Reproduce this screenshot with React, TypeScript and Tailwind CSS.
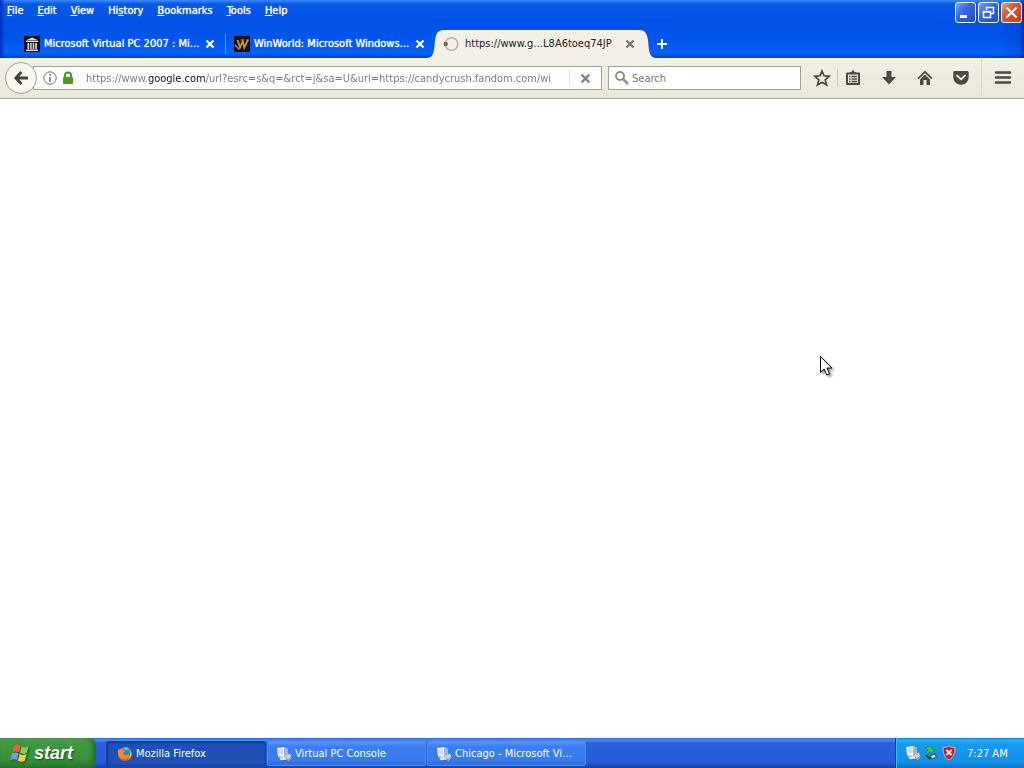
import type { ReactNode } from "react";

const menus: { before: string; key: string; after: string }[] = [
  { before: "", key: "F", after: "ile" },
  { before: "", key: "E", after: "dit" },
  { before: "", key: "V", after: "iew" },
  { before: "Hi", key: "s", after: "tory" },
  { before: "", key: "B", after: "ookmarks" },
  { before: "", key: "T", after: "ools" },
  { before: "", key: "H", after: "elp" },
];

function Cross({ className }: { className: string }) {
  return (
    <svg viewBox="0 0 10 10" className={className} fill="none" stroke="currentColor" strokeWidth="2.200" aria-hidden="true">
      <path d="M1.500 1.500 8.500 8.500M8.500 1.500 1.500 8.500" />
    </svg>
  );
}

function ArchiveIcon() {
  return (
    <svg viewBox="0 0 16 16" className="size-4 shrink-0" aria-hidden="true">
      <rect width="16" height="16" fill="#0b0b12" />
      <path d="M2.500 4 8 1.500 13.500 4zM2 4.500h12V6H2zM3.500 7h1.700v6H3.500zM6.200 7h1.500v6H6.200zM8.700 7h1.500v6H8.700zM11.200 7h1.700v6h-1.700zM2 13.500h12V15H2z" fill="#d9d9e2" />
    </svg>
  );
}

function WinWorldIcon() {
  return (
    <svg viewBox="0 0 16 16" className="size-4 shrink-0" aria-hidden="true">
      <rect width="16" height="16" fill="#15100f" />
      <path d="M3.500 4 6 11.500 8.800 5l1.500 6.500L14 4" fill="none" stroke="#d0902f" strokeWidth="1.800" />
      <path d="M6.500 4h3M12 4h3" stroke="#d0902f" strokeWidth="1.200" />
      <path d="M1 9l4.500 4.500" stroke="#8d8da5" strokeWidth="1.400" />
    </svg>
  );
}

function ThrobberIcon() {
  return (
    <svg viewBox="0 0 16 16" className="size-4 shrink-0" fill="none" aria-hidden="true">
      <circle cx="8.500" cy="8" r="6.300" stroke="#b5b5ab" strokeWidth="1.600" />
      <circle cx="2.700" cy="8" r="2.200" fill="#65655f" />
    </svg>
  );
}

function PcIcon() {
  return (
    <svg viewBox="0 0 16 16" className="size-4 shrink-0" aria-hidden="true">
      <path d="M1 2 8.500 1v10L2 10.500z" fill="#f1f2f6" />
      <path d="M2.500 3.500 7.500 2.800v5.700l-4.700-.2z" fill="#d3d9e6" />
      <path d="M8.500 1 12 2.500v7.500L8.500 11z" fill="#a9b0be" />
      <path d="M3 11.500l7-.5 2 2.500-7 1z" fill="#e3e6ec" />
      <path d="M5 14.500l7-1 .5 1-7 1z" fill="#596782" />
      <path d="M9.500 9.500l4.500-2 1.500 4-3 3.500-3-2z" fill="#c9d0dc" />
      <path d="M10 12.500l2.300 1.500 2.700-3" fill="none" stroke="#8592a8" strokeWidth="1" />
    </svg>
  );
}

function FirefoxIcon() {
  return (
    <svg viewBox="0 0 16 16" className="size-4 shrink-0" aria-hidden="true">
      <circle cx="8" cy="8" r="7" fill="#e2601b" />
      <circle cx="8.500" cy="6.500" r="5" fill="#2f87d0" />
      <path d="M6 2.500c2-1.500 5-1 6.500.8l-3 .7z" fill="#70c5ec" />
      <path d="M1.500 3c.8.8 1.500.8 2.700.8.8-.7 1.500-1 2.300-1-.7.700-.8 1.300-.6 1.900l2.300.6-2 1.400C6 9 8 10.200 10.500 9c1-.5 2.100 0 1.600 1-3 4-8 3.800-10.100.5C.800 8.500.800 5 1.500 3z" fill="#f28b22" />
      <path d="M13.500 4c1.500 3 1 7.500-2.300 9.500 1.600-2.500 2.300-5.500 2.300-9.500z" fill="#f8c540" />
    </svg>
  );
}

function WindowsFlag() {
  return (
    <svg viewBox="1 1 18 17" className="size-5 shrink-0 drop-shadow-[1px_1px_1px_#174b17]" aria-hidden="true">
      <path d="M4.500 3c2-1.500 4-1.300 6 0L9 9c-2-1.200-4-1.200-6 0z" fill="#ee6336" />
      <path d="M11.300 3.500c2 1.200 4 1.300 6.500 0L16.200 9.500c-2.200 1.200-4.300 1-6.300-.2z" fill="#91ca4a" />
      <path d="M2.700 10c2-1.300 4-1.200 6 0L7.200 16c-2-1.300-4-1.200-6 0z" fill="#6b9df5" />
      <path d="M9.600 10.400c2 1.200 4.200 1.200 6.300.1L14.300 16.500c-2.200 1.200-4.300 1.100-6.300-.1z" fill="#f7cc3d" />
    </svg>
  );
}

function ToolButton({ label, children }: { label: string; children: ReactNode }) {
  return (
    <button aria-label={label} className="flex h-7 w-9 shrink-0 items-center justify-center text-[#4b4a42]">
      <svg viewBox="0 0 18 18" className="size-[18px]" aria-hidden="true">{children}</svg>
    </button>
  );
}

function CaptionButton({ label, close, children }: { label: string; close?: boolean; children: ReactNode }) {
  return (
    <button
      aria-label={label}
      className={`flex size-[21px] items-center justify-center rounded-[3px] border border-white ${
        close
          ? "bg-[linear-gradient(135deg,#f0a080,#e05a35_35%,#c93a12)]"
          : "bg-[linear-gradient(135deg,#7fa5f5,#3768e2_40%,#1b48cc)]"
      }`}
    >
      <svg viewBox="0 0 19 19" className="size-[19px]" fill="none" stroke="#fff" aria-hidden="true">{children}</svg>
    </button>
  );
}

function Tab({ icon, title }: { icon: ReactNode; title: string }) {
  return (
    <div className="flex h-7 w-[209px] items-center pr-[5px] text-white">
      <button className="flex flex-1 items-center gap-1 pl-2 whitespace-nowrap">
        {icon}
        <span className="[text-shadow:0_0_1px_#fff]">{title}</span>
      </button>
      <button aria-label="Close tab" className="flex size-5 shrink-0 items-center justify-center">
        <Cross className="size-[10px]" />
      </button>
    </div>
  );
}

function TaskButton({ icon, title, active }: { icon: ReactNode; title: string; active?: boolean }) {
  return (
    <button
      className={`flex h-[25px] items-center gap-[3px] rounded-[2px] border whitespace-nowrap text-white ${
        active
          ? "w-40 border-[#153f99] bg-[#1e50b7] pl-[10px] shadow-[inset_1px_1px_2px_#123a8c]"
          : "w-[159px] border-[#4b8cf5] bg-[linear-gradient(180deg,#5296fb,#3b7ef1_20%,#387bee_80%,#2f6bdc)] pl-2"
      }`}
    >
      {icon}
      <span>{title}</span>
    </button>
  );
}

export default function App() {
  return (
    <div className="flex min-h-screen flex-col bg-white font-['DejaVu_Sans_Condensed','Liberation_Sans',sans-serif] text-[11px] leading-4 text-[#222]">
      <header className="flex flex-col bg-[linear-gradient(90deg,#0030c0_0,transparent_5px),linear-gradient(270deg,#0026b0_0,#0026b033_4px,transparent_30px),linear-gradient(180deg,#3a8cff_0,#0a58e6_4px,#0052e6_20px,#0054ea_38px,#0462fb_53px,#0050dc_56px,#0340b8_58px)]">
        <div className="flex items-start justify-between pr-[2px]">
          <nav aria-label="Menu bar" className="flex gap-[14px] pt-[3px] pl-[7px] text-white">
            {menus.map((m) => (
              <button key={m.key + m.after} className="[text-shadow:0_0_1px_#fff]">
                {m.before}
                <span className="underline">{m.key}</span>
                {m.after}
              </button>
            ))}
          </nav>
          <div className="flex gap-[2px] pt-[2px]">
            <CaptionButton label="Minimize">
              <path d="M4 13.500h7" strokeWidth="3" />
            </CaptionButton>
            <CaptionButton label="Restore">
              <path d="M7.500 7V4.500h7v6H12M7.500 4.500h7M4.500 8.500h7v6h-7zM4.500 9h7" strokeWidth="1.500" />
            </CaptionButton>
            <CaptionButton label="Close" close>
              <path d="M4.500 4.500l10 10M14.500 4.500l-10 10" strokeWidth="2.200" />
            </CaptionButton>
          </div>
        </div>
        <div className="flex h-[35px] items-end pl-4">
          <Tab icon={<ArchiveIcon />} title="Microsoft Virtual PC 2007 : Mi…" />
          <span className="mb-1 h-5 w-px bg-[#5c9bfb]" />
          <Tab icon={<WinWorldIcon />} title="WinWorld: Microsoft Windows…" />
          <div className="-ml-2 flex h-7">
            <svg viewBox="0 0 16 28" className="h-7 w-4 shrink-0 text-[#f3f1e5]" aria-hidden="true">
              <path d="M0 28C4 27.500 6 25.500 7 20L8 10C9 3.500 11 .3 16 0v28z" fill="currentColor" />
            </svg>
            <div className="flex w-[197px] items-center bg-[#f3f1e5]">
              <button className="flex flex-1 items-center gap-[6px] whitespace-nowrap">
                <ThrobberIcon />
                <span>https://www.g…L8A6toeq74JP</span>
              </button>
              <button aria-label="Close tab" className="flex size-5 shrink-0 items-center justify-center text-[#77776d]">
                <Cross className="size-[10px]" />
              </button>
            </div>
            <svg viewBox="0 0 16 28" className="h-7 w-4 shrink-0 text-[#f3f1e5]" aria-hidden="true">
              <path d="M16 28C12 27.500 10 25.500 9 20L8 10C7 3.500 5 .3 0 0v28z" fill="currentColor" />
            </svg>
          </div>
          <button aria-label="Open a new tab" className="-ml-2 flex size-7 items-center justify-center text-white">
            <svg viewBox="0 0 10 10" className="size-[10px]" aria-hidden="true">
              <path d="M4 0h2v4h4v2H6v4H4V6H0V4h4z" fill="currentColor" />
            </svg>
          </button>
        </div>
      </header>

      <div className="flex h-[41px] items-center border-b border-[#aaa898] bg-[linear-gradient(180deg,#f3f1e5,#e9e7d8)]">
        <button aria-label="Go back" className="z-10 ml-[5px] flex size-8 shrink-0 items-center justify-center rounded-full border border-[#a3a294] bg-[#f8f7ef] text-[#45443d]">
          <svg viewBox="0 0 16 16" className="size-4" fill="none" stroke="currentColor" strokeWidth="2.800" aria-hidden="true">
            <path d="M8.500 2 2.800 8l5.700 6M3 8h12" />
          </svg>
        </button>
        <div className="-ml-1 flex h-6 min-w-0 flex-1 items-center border border-[#a3a294] bg-white pl-2">
          <button aria-label="Site information" className="flex size-4 shrink-0 items-center justify-center">
            <svg viewBox="0 0 14 14" className="size-[14px]" fill="none" stroke="#6c6c68" aria-hidden="true">
              <circle cx="7" cy="7" r="6.200" />
              <path d="M7 6v5M7 3v1.700" strokeWidth="1.500" />
            </svg>
          </button>
          <svg viewBox="0 0 12 14" className="ml-1 h-[14px] w-3 shrink-0" aria-hidden="true">
            <path d="M3 7V4.500a3 3 0 0 1 6 0V7" fill="none" stroke="#4a9a2b" strokeWidth="2" />
            <rect x="1" y="6" width="10" height="7" rx="1" fill="#4a9a2b" />
          </svg>
          <input
            aria-label="Address"
            readOnly
            value="https://www.google.com/url?esrc=s&q=&rct=j&sa=U&url=https://candycrush.fandom.com/wi"
            className="ml-3 min-w-0 flex-1 bg-[linear-gradient(90deg,#777_62px,#111_62px,#111_120px,#777_120px)] bg-clip-text pt-[2px] text-transparent outline-none"
          />
          <button aria-label="Stop loading" className="flex h-4 w-8 shrink-0 items-center justify-center border-l border-[#e4e4de] text-[#85857e]">
            <Cross className="size-[11px]" />
          </button>
        </div>
        <label className="ml-[6px] flex h-6 w-[193px] shrink-0 items-center gap-[2px] border border-[#a3a294] bg-white pl-[5px]">
          <svg viewBox="0 0 16 16" className="size-4 shrink-0" fill="none" stroke="#909089" aria-hidden="true">
            <circle cx="6" cy="6" r="4" strokeWidth="2" />
            <path d="M9 9l5 5" strokeWidth="2.500" />
          </svg>
          <input aria-label="Search" placeholder="Search" className="min-w-0 flex-1 pt-[2px] outline-none placeholder:text-[#777]" />
        </label>
        <div className="flex shrink-0 items-center pl-[3px]">
          <ToolButton label="Bookmark this page">
            <path d="M9 2l2 4.800 5.200.5-4 3.500 1.300 5.200L9 13.200 4.500 16l1.300-5.200-4-3.500L7 6.800z" fill="none" stroke="currentColor" strokeWidth="1.700" />
          </ToolButton>
          <span className="-ml-[3px] h-[18px] w-px bg-[#cbc9bb]" />
          <div className="-ml-[3px] flex">
            <ToolButton label="Show your bookmarks">
              <path d="M3 4.500h12v10.500H3z" fill="none" stroke="currentColor" strokeWidth="2" strokeLinejoin="round" />
              <path d="M6 5V3h1.500l.7-1.500h1.600l.7 1.500H12v2z" fill="currentColor" />
              <path d="M5 7.500h1.500m1 0H13M5 10h1.500m1 0H13M5 12.500h1.500m1 0H13" stroke="currentColor" strokeWidth="1.300" />
            </ToolButton>
            <ToolButton label="Downloads">
              <path d="M6.500 2h5v6H16l-7 7.500L2 8h4.500z" fill="currentColor" />
            </ToolButton>
            <ToolButton label="Home">
              <path d="M9 1.500 16.500 9l-1.200 1.200L9 4 2.700 10.200 1.500 9zM9 5.500l5 5V16h-3.500v-5h-3v5H4v-5.500z" fill="currentColor" />
            </ToolButton>
            <ToolButton label="Save to Pocket">
              <path d="M3 2h12c1 0 1.700.7 1.700 1.700V8c0 4.500-3.500 7.700-7.700 7.700S1.300 12.500 1.300 8V3.700C1.300 2.700 2 2 3 2z" fill="currentColor" />
              <path d="M5 6.500 9 10.300l4-3.800" fill="none" stroke="#f3f1e5" strokeWidth="1.800" strokeLinecap="round" />
            </ToolButton>
          </div>
          <div className="ml-[2px] flex h-10 w-[43px] items-center justify-center border-l border-[#dbd9cb]">
            <ToolButton label="Open menu">
              <path d="M2 3.500h14M2 8.500h14M2 13.500h14" stroke="currentColor" strokeWidth="2.500" strokeLinecap="round" />
            </ToolButton>
          </div>
        </div>
      </div>

      <main className="relative flex-1 bg-white">
        <svg viewBox="0 0 16 24" className="absolute top-[40%] left-[80%] h-6 w-4 drop-shadow-[2px_2px_1px_#0006]" aria-hidden="true">
          <path d="M1.500 1.500v16l3.700-3.500 2.600 6 2.700-1.200L8 13h4.800z" fill="#fff" stroke="#000" />
        </svg>
      </main>

      <footer className="flex h-[30px] items-center bg-[linear-gradient(180deg,#2a62d8_0,#4a8df5_2px,#2a63dc_5px,#245bdb_24px,#1941a5)]">
        <button className="flex h-[30px] w-24 items-center gap-1 rounded-r-lg bg-[linear-gradient(180deg,#69b069_0,#3f9a40_4px,#37943a_20px,#2a7a2c)] pb-px pl-[10px] font-['Liberation_Sans',sans-serif] text-lg leading-5 font-bold text-white italic shadow-[inset_-3px_0_4px_#226a25] [text-shadow:1px_1px_2px_#174b17]">
          <WindowsFlag />
          <span>start</span>
        </button>
        <div className="flex flex-1 gap-px pt-px pl-[10px]">
          <TaskButton active icon={<FirefoxIcon />} title="Mozilla Firefox" />
          <TaskButton icon={<PcIcon />} title="Virtual PC Console" />
          <TaskButton icon={<PcIcon />} title="Chicago - Microsoft Vi…" />
        </div>
        <div className="flex h-[30px] w-[129px] items-center border-l border-[#0b3f9c] bg-[linear-gradient(180deg,#0d74d8_0,#2fb0f6_2px,#169aee_6px,#1290e8_24px,#0f70c8)] pl-[9px] text-white shadow-[inset_1px_0_0_#3cc0fa]">
          <div className="flex gap-[2px]">
            <PcIcon />
            <svg viewBox="0 0 16 16" className="size-4" aria-hidden="true">
              <path d="M6 10l6.500-2 2 4.500L8 15z" fill="#3d5f79" />
              <path d="M8 11l3.700-1.200 1 2.200-3.700 1.300z" fill="#c7dde8" />
              <path d="M2 2.500 8 1l1 2.500 3 1L8 8.500 6.500 6.500 4.500 9l-2-2L5 5z" fill="#3fc549" stroke="#1d7d2b" strokeWidth=".6" />
              <path d="M3 10l4 4" stroke="#314653" strokeWidth="2" />
            </svg>
            <svg viewBox="0 0 16 16" className="size-4" aria-hidden="true">
              <path d="M8 1c2 1.200 4 1.500 6 1.500 0 6-1.500 10-6 12.500C3.500 12.500 2 8.500 2 2.500 4 2.500 6 2.200 8 1z" fill="#c71c2e" stroke="#efc2c6" strokeWidth=".8" />
              <path d="M5.500 5l5 5M10.500 5l-5 5" stroke="#fff" strokeWidth="1.800" />
            </svg>
          </div>
          <time className="ml-[10px] pt-px">7:27 AM</time>
        </div>
      </footer>
    </div>
  );
}
